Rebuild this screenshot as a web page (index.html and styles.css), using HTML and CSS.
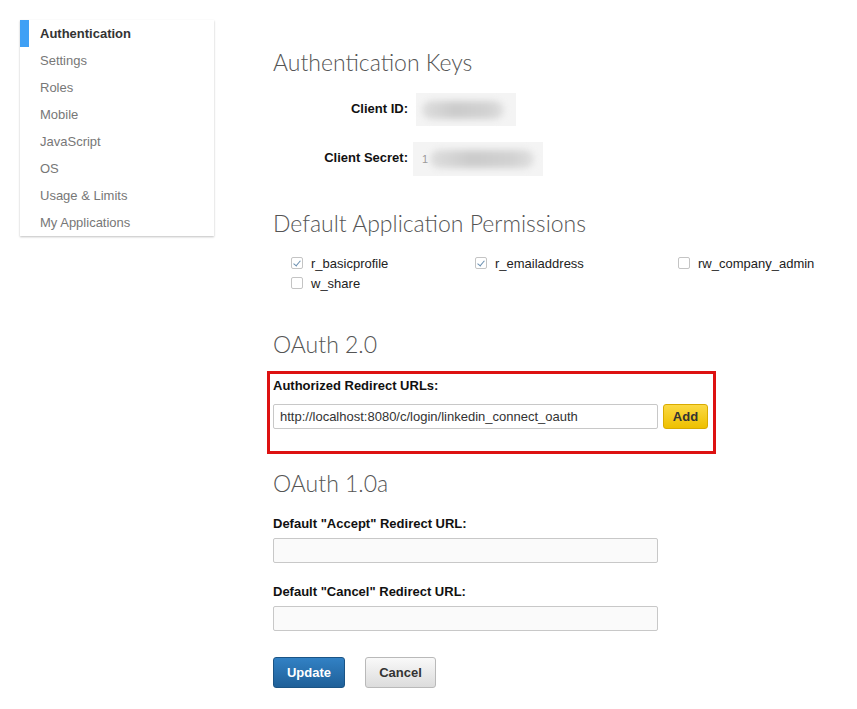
FILE: index.html
```html
<!DOCTYPE html>
<html lang="en">

<head>
    <meta charset="UTF-8">
    <meta name="viewport" content="width=device-width, initial-scale=1.0">
    <title>Application Details</title>
    <link rel="stylesheet" href="styles.css">
</head>

<body>
    <div class="page">
        <ul class="side-nav">
            <li class="active">Authentication</li>
            <li>Settings</li>
            <li>Roles</li>
            <li>Mobile</li>
            <li>JavaScript</li>
            <li>OS</li>
            <li>Usage &amp; Limits</li>
            <li>My Applications</li>
        </ul>

        <main class="content">
            <h2>Authentication Keys</h2>
            <div class="key-row">
                <span class="key-label">Client ID:</span>
                <span class="key-value key-id"><span class="blur"></span></span>
            </div>
            <div class="key-row">
                <span class="key-label">Client Secret:</span>
                <span class="key-value key-secret"><span class="digit">1</span><span class="blur"></span></span>
            </div>

            <h2 class="section">Default Application Permissions</h2>
            <div class="perms">
                <label class="perm"><span class="check checked"></span>r_basicprofile</label>
                <label class="perm"><span class="check checked"></span>r_emailaddress</label>
                <label class="perm"><span class="check"></span>rw_company_admin</label>
                <label class="perm"><span class="check"></span>w_share</label>
            </div>

            <h2 class="section oauth2">OAuth 2.0</h2>
            <div class="highlight">
                <label class="field-label">Authorized Redirect URLs:</label>
                <div class="url-row">
                    <input type="text" class="text-input" value="http://localhost:8080/c/login/linkedin_connect_oauth">
                    <button class="btn btn-add">Add</button>
                </div>
            </div>

            <h2 class="oauth1">OAuth 1.0a</h2>
            <label class="field-label first">Default "Accept" Redirect URL:</label>
            <input type="text" class="text-input">
            <label class="field-label">Default "Cancel" Redirect URL:</label>
            <input type="text" class="text-input">

            <div class="actions">
                <button class="btn btn-primary">Update</button>
                <button class="btn btn-cancel">Cancel</button>
            </div>
        </main>
    </div>
</body>

</html>
```

FILE: styles.css
```css
:root {
    --text-color: #222222;
    --muted-color: #777777;
    --heading-color: #555555;
    --border-color: #c8c8c8;
    --accent-blue: #3fa0f5;
}

* {
    box-sizing: border-box;
    margin: 0;
    padding: 0;
}

body {
    font-family: 'Liberation Sans', Arial, sans-serif;
    font-size: 13px;
    color: var(--text-color);
    background: #ffffff;
}

.page {
    display: flex;
    align-items: flex-start;
}

/* left menu */
.side-nav {
    list-style: none;
    margin: 20px 0 0 20px;
    width: 194px;
    background: #ffffff;
    box-shadow: 0 1px 2px rgba(0, 0, 0, 0.25);
}

.side-nav li {
    height: 27px;
    line-height: 27px;
    padding-left: 11px;
    color: var(--muted-color);
    border-left: 9px solid transparent;
}

.side-nav li.active {
    border-left-color: var(--accent-blue);
    color: #333333;
    font-weight: bold;
}

/* main column */
.content {
    margin-left: 59px;
    padding-top: 47px;
    width: 560px;
}

h2 {
    font-family: 'Lato', 'Open Sans', sans-serif;
    font-weight: 300;
    font-size: 23px;
    line-height: 30px;
    color: var(--heading-color);
}

.key-row {
    display: flex;
    align-items: center;
    margin-top: 16px;
}

.key-label {
    width: 135px;
    text-align: right;
    font-weight: bold;
    color: #111111;
    margin-top: -3px;
}

.key-value {
    display: flex;
    align-items: center;
    background: #f4f4f4;
}

.key-id {
    margin-left: 8px;
    width: 100px;
    height: 33px;
}

.key-secret {
    margin-left: 5px;
    width: 130px;
    height: 34px;
}

.blur {
    display: block;
    height: 18px;
    background: linear-gradient(90deg, #dedede, #cbcbcb 40%, #d2d2d2 80%, #e0e0e0);
    border-radius: 9px;
    filter: blur(3px);
}

.key-id .blur {
    width: 82px;
    margin-left: 6px;
}

.key-secret .blur {
    width: 104px;
    margin-left: 2px;
}

.digit {
    margin-left: 9px;
    color: #999999;
    font-size: 11px;
}

.section {
    margin-top: 32px;
}

/* permissions */
.perms {
    display: grid;
    grid-template-columns: 184px 203px auto;
    margin: 15px 0 0 18px;
    width: 560px;
}

.perm {
    display: flex;
    align-items: center;
    height: 20px;
    color: #222222;
}

.check {
    position: relative;
    width: 12px;
    height: 12px;
    margin-right: 8px;
    border: 1px solid #c4c4c4;
    border-radius: 2px;
    background: #ffffff;
}

.check.checked::after {
    content: '';
    position: absolute;
    left: 3px;
    top: 1px;
    width: 3px;
    height: 6px;
    border: solid #6a8fb0;
    border-width: 0 1px 1px 0;
    transform: rotate(40deg);
}

.oauth2 {
    margin-top: 36px;
}

/* highlighted block */
.highlight {
    margin: 12px 0 0 -6px;
    width: 449px;
    border: 3px solid #dd1111;
    padding: 4px 5px 22px 3px;
}

.field-label {
    display: block;
    font-weight: bold;
    line-height: 16px;
    color: #111111;
}

.url-row {
    display: flex;
    gap: 5px;
    margin-top: 10px;
}

.text-input {
    display: block;
    width: 385px;
    height: 25px;
    padding: 0 6px;
    border: 1px solid var(--border-color);
    border-radius: 2px;
    background: #fafafa;
    font-family: inherit;
    font-size: 13px;
    color: #333333;
}

.highlight .text-input {
    background: #ffffff;
}

.btn {
    font-family: inherit;
    font-size: 13px;
    font-weight: bold;
    border-radius: 3px;
    cursor: pointer;
}

.btn-add {
    width: 45px;
    height: 25px;
    color: #333333;
    border: 1px solid #d9ab00;
    background: linear-gradient(#fbd943, #eec000);
}

.oauth1 {
    margin-top: 14px;
}

.field-label.first {
    margin-top: 18px;
}

.field-label + .text-input {
    margin-top: 6px;
}

.text-input + .field-label {
    margin-top: 21px;
}

.actions {
    display: flex;
    gap: 20px;
    margin-top: 26px;
}

.btn-primary {
    width: 72px;
    height: 31px;
    color: #ffffff;
    border: 1px solid #1b5485;
    background: linear-gradient(#3281c4, #1f6099);
}

.btn-cancel {
    width: 71px;
    height: 31px;
    color: #333333;
    border: 1px solid #b9b9b9;
    background: linear-gradient(#f9f9f9, #dcdcdc);
}
```
